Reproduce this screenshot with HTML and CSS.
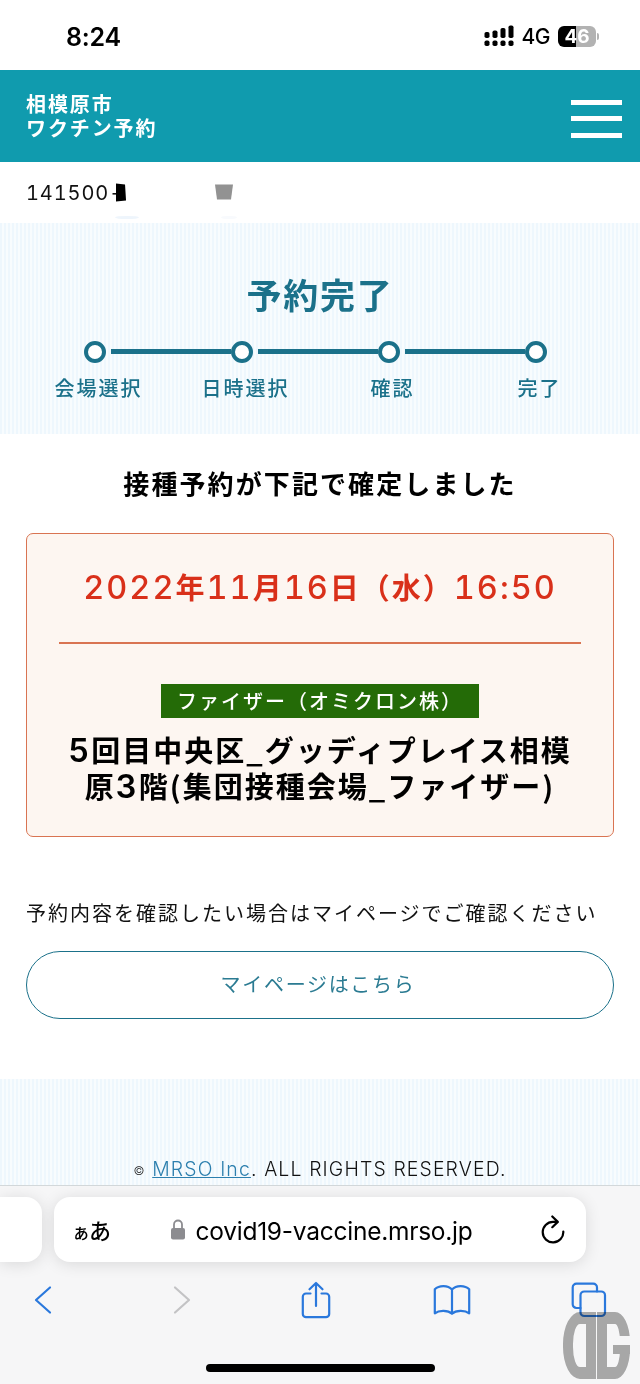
FILE: index.html
```
<!DOCTYPE html>
<html lang="ja">
<head>
  <meta charset="UTF-8" />
  <meta name="viewport" content="width=device-width, initial-scale=1.0"/>
  <title>相模原市 ワクチン予約</title>
  <link rel="stylesheet" href="styles.css">
</head>
<body>
  <div class="status-bar">
    <span class="time">8:24</span>
    <div class="status-icons">
      <svg class="signal" width="30" height="22" viewBox="0 0 30 22">
        <rect x="0.5" y="7" width="5" height="6" rx="1.8"/>
        <rect x="8.5" y="5.5" width="5" height="7.5" rx="1.8"/>
        <rect x="16.5" y="3" width="5" height="10" rx="1.8"/>
        <rect x="24.5" y="0.5" width="5" height="12.5" rx="1.8"/>
        <rect x="0.5" y="15.5" width="5" height="5.5" rx="1.8"/>
        <rect x="8.5" y="15.5" width="5" height="5.5" rx="1.8"/>
        <rect x="16.5" y="15.5" width="5" height="5.5" rx="1.8"/>
        <rect x="24.5" y="15.5" width="5" height="5.5" rx="1.8"/>
      </svg>
      <span class="network">4G</span>
      <span class="battery">46</span>
      <span class="battery-tip"></span>
    </div>
  </div>

  <header>
    <h1>相模原市<br>ワクチン予約</h1>
    <button class="menu" aria-label="メニュー"><span></span><span></span><span></span></button>
  </header>

  <div class="user-id">
    <span>141500-</span>
    <svg class="masks" width="130" height="61" viewBox="0 0 130 61">
      <path d="M1 21.5L10 22.5L11 38.5L1 39.5Z" fill="#000"/>
      <path d="M100 22.5H118L116 37.5H102Z" fill="#929292"/>
      <ellipse cx="12" cy="55.5" rx="12" ry="1.6" fill="#eef5fc"/>
      <ellipse cx="114" cy="55.5" rx="8" ry="1.6" fill="#f8fafd"/>
    </svg>
  </div>

  <section class="progress">
    <h2>予約完了</h2>
    <div class="dots">
      <span class="dot"></span><span class="line"></span>
      <span class="dot"></span><span class="line"></span>
      <span class="dot"></span><span class="line"></span>
      <span class="dot"></span>
    </div>
    <ul class="steps">
      <li>会場選択</li>
      <li>日時選択</li>
      <li>確認</li>
      <li>完了</li>
    </ul>
  </section>

  <main>
    <h3>接種予約が下記で確定しました</h3>
    <div class="card">
      <p class="date"><span class="num">2022</span>年<span class="num">11</span>月<span class="num">16</span>日（水）<span class="num">16:50</span></p>
      <hr>
      <span class="vaccine">ファイザー（オミクロン株）</span>
      <p class="place"><span class="num">5</span>回目中央区_グッディプレイス相模<br>原<span class="num">3</span>階(集団接種会場_ファイザー)</p>
    </div>
    <p class="note">予約内容を確認したい場合はマイページでご確認ください</p>
    <a class="mypage" href="#">マイページはこちら</a>
  </main>

  <footer>
    <p><small>©</small> <a href="#">MRSO Inc</a>. ALL RIGHTS RESERVED.</p>
  </footer>

  <div class="browser">
    <div class="tabs">
      <div class="prev-tab"></div>
      <div class="address">
        <span class="reader"><small>ぁ</small>あ</span>
        <div class="url">
          <svg width="16" height="21" viewBox="0 0 16 21">
            <path d="M4 10V5.5a4 4 0 0 1 8 0V10" fill="none" stroke="#8c8c90" stroke-width="1.8"/>
            <rect x="1" y="9" width="14" height="11.5" rx="2" fill="#8c8c90"/>
          </svg>
          <span>covid19-vaccine.mrso.jp</span>
        </div>
        <svg class="reload" width="26" height="30" viewBox="0 0 26 30">
          <path d="M17.2 6.8H13A10.3 10.3 0 1 0 23.3 16.5M12.3 1.5L17.8 6.9L12.3 12.2"/>
        </svg>
      </div>
    </div>
    <div class="toolbar">
      <svg width="18" height="30" viewBox="0 0 18 30"><path d="M16 2.5L2 15L16 27.5"/></svg>
      <svg class="off" width="18" height="30" viewBox="0 0 18 30"><path d="M2 2.5L16 15L2 27.5"/></svg>
      <svg width="30" height="38" viewBox="0 0 30 38"><path d="M9.5 12.5H5A3.2 3.2 0 0 0 1.8 15.7V33A3.2 3.2 0 0 0 5 36.2H25A3.2 3.2 0 0 0 28.2 33V15.7A3.2 3.2 0 0 0 25 12.5H20.5M15 25V2.2M8.5 8.3L15 2L21.5 8.3"/></svg>
      <svg width="38" height="32" viewBox="0 0 38 32"><path d="M19 5.5C15 1 6 1 1.8 5.3V29.3C6 26 15 26 19 29.8C23 26 32 26 36.2 29.3V5.3C32 1 23 1 19 5.5V29.8"/></svg>
      <svg width="36" height="36" viewBox="0 0 36 36"><path d="M9.5 26H5.5A3.8 3.8 0 0 1 1.7 22.2V5.5A3.8 3.8 0 0 1 5.5 1.7H22.2A3.8 3.8 0 0 1 26 5.5V9.5"/><rect x="9.5" y="9.5" width="24.5" height="24.5" rx="3.8"/></svg>
    </div>
    <div class="home-bar"></div>
    <div class="badge"><span class="badge-left"></span><span class="badge-right"></span></div>
  </div>
</body>
</html>
```
FILE: styles.css
```
* {
  margin: 0;
  padding: 0;
  box-sizing: border-box;
}
body {
  width: 640px;
  height: 1384px;
  overflow: hidden;
  display: flex;
  flex-direction: column;
  background: #fff;
  color: #111;
  font-family: "Noto Sans CJK JP", sans-serif;
}
svg {
  display: block;
  flex: none;
}

/* phone status bar */
.status-bar {
  height: 70px;
  padding: 2px 41px 0 66px;
  display: flex;
  justify-content: space-between;
  align-items: center;
  font-family: Inter, sans-serif;
  color: #000;
}
.time {
  margin-top: 1px;
  font-size: 25px;
  font-weight: 600;
  letter-spacing: -0.2px;
}
.status-icons {
  display: flex;
  align-items: center;
}
.network {
  font-size: 21px;
  font-weight: 500;
  margin: 0 8px;
  letter-spacing: -0.5px;
}
.battery {
  width: 38px;
  height: 21px;
  line-height: 21px;
  border-radius: 6px;
  background: linear-gradient(90deg, #000 18px, #b2b2b2 18px);
  color: #fff;
  font-size: 19px;
  font-weight: 700;
  text-align: center;
}
.battery-tip {
  width: 2px;
  height: 7px;
  margin-left: 1px;
  border-radius: 0 2px 2px 0;
  background: #b2b2b2;
}

header {
  height: 92px;
  padding: 0 18px 0 26px;
  display: flex;
  justify-content: space-between;
  align-items: center;
  background: #109bae;
  color: #fff;
}
header h1 {
  font-size: 20px;
  font-weight: 700;
  line-height: 24px;
  letter-spacing: 1.9px;
}
.menu {
  width: 51px;
  border: 0;
  background: none;
  display: flex;
  flex-direction: column;
  gap: 11.5px;
  margin-top: 5px;
}
.menu span {
  height: 5px;
  background: #fff;
}

.user-id {
  height: 61px;
  padding-left: 26px;
  display: flex;
  align-items: center;
  font-family: Inter, sans-serif;
  font-size: 20px;
  font-weight: 400;
  font-variant-numeric: tabular-nums;
  letter-spacing: 0.9px;
}
.user-id span {
  width: 89px;
}

.progress,
footer {
  background: repeating-linear-gradient(90deg, #eef7fd 0, #eef7fd 2px, #f8fcfe 2px, #f8fcfe 4px);
}
.progress {
  height: 211px;
  padding-top: 46px;
  color: #1b718a;
}
.progress h2 {
  font-size: 35px;
  font-weight: 700;
  line-height: 50px;
  letter-spacing: 1.8px;
  text-align: center;
}
.dots {
  display: flex;
  align-items: center;
  margin: 22px 0 0 84px;
  width: 463px;
}
.dot {
  width: 22px;
  height: 22px;
  border: 4.5px solid #1b718a;
  border-radius: 50%;
  background: #fff;
  flex: none;
}
.line {
  flex: 1;
  height: 5px;
  margin: -2px 0 0 5px;
  background: #1b718a;
}
.steps {
  display: grid;
  grid-template-columns: repeat(4, 147px);
  margin: 10px 0 0 25px;
  list-style: none;
  text-align: center;
  font-size: 20px;
  font-weight: 500;
  line-height: 30px;
  letter-spacing: 2px;
}

main {
  height: 645px;
  padding: 30px 26px 0;
}
main h3 {
  font-size: 26px;
  font-weight: 700;
  line-height: 38px;
  letter-spacing: 2.1px;
  text-align: center;
  color: #000;
}
.card {
  height: 304px;
  margin-top: 31px;
  padding: 29px 32px 0;
  border: 1.5px solid #d97452;
  border-radius: 7px;
  background: #fdf6f1;
  text-align: center;
}
.num {
  font-family: Inter, sans-serif;
  font-size: 32.5px;
  font-weight: 500;
  font-variant-numeric: tabular-nums;
  line-height: 0;
}
.date {
  font-size: 29px;
  font-weight: 700;
  line-height: 46px;
  letter-spacing: 2px;
  color: #d9301a;
  white-space: nowrap;
}
.card hr {
  margin: 33px 0 40px;
  border: 0;
  border-top: 2px solid #d97452;
}
.vaccine {
  display: block;
  width: 318px;
  height: 34px;
  margin: 0 auto 13px;
  background: #246b07;
  color: #fff;
  font-size: 20px;
  font-weight: 500;
  line-height: 34px;
  letter-spacing: 2px;
  white-space: nowrap;
}
.place {
  color: #000;
  font-size: 29px;
  font-weight: 700;
  line-height: 36px;
  letter-spacing: 2px;
  white-space: nowrap;
}
.place .num {
  font-weight: 600;
}
.note {
  margin-top: 61px;
  font-size: 20px;
  font-weight: 400;
  line-height: 30px;
  letter-spacing: 2px;
  white-space: nowrap;
}
.mypage {
  display: block;
  height: 68px;
  margin-top: 23px;
  padding-right: 4px;
  border: 1.5px solid #1b718a;
  border-radius: 34px;
  color: #2b7b92;
  font-size: 20px;
  font-weight: 400;
  line-height: 64px;
  letter-spacing: 1.7px;
  text-align: center;
  text-decoration: none;
}

footer {
  height: 106px;
  padding-top: 77px;
  text-align: center;
  font-family: Inter, sans-serif;
  font-size: 19.4px;
  font-weight: 350;
  line-height: 26px;
  letter-spacing: 1.15px;
  white-space: nowrap;
}
footer small {
  font-size: 12px;
  vertical-align: 1px;
}
footer a {
  color: #2c7fae;
}

/* browser controls */
.browser {
  position: relative;
  height: 199px;
  border-top: 1px solid #d3d8da;
  background: #f6f6f7;
}
.tabs {
  height: 76px;
  padding-top: 11px;
  display: flex;
  gap: 12px;
}
.prev-tab,
.address {
  height: 65px;
  background: #fff;
  box-shadow: 0 2px 16px rgba(0, 0, 0, 0.12);
}
.prev-tab {
  width: 42px;
  border-radius: 0 16px 16px 0;
}
.address {
  width: 532px;
  padding: 0 20px 0 18px;
  border-radius: 16px;
  display: flex;
  justify-content: space-between;
  align-items: center;
  color: #000;
}
.reader {
  margin-top: -2px;
  font-size: 22px;
  font-weight: 500;
  letter-spacing: -1px;
}
.reader small {
  font-size: 18px;
}
.url {
  display: flex;
  align-items: center;
  gap: 9px;
  margin-right: 7px;
  font-family: Inter, sans-serif;
  font-size: 24.5px;
  letter-spacing: -0.25px;
}
.url span {
  margin-top: 2px;
}
.reload {
  fill: none;
  stroke: #000;
  stroke-width: 2.2;
  stroke-linecap: round;
  stroke-linejoin: round;
}
.toolbar {
  width: 682px;
  height: 76px;
  margin-left: -25px;
  display: grid;
  grid-template-columns: repeat(5, 1fr);
  justify-items: center;
  align-items: center;
}
.toolbar svg {
  fill: none;
  stroke: #2a78dc;
  stroke-width: 2.2;
  stroke-linecap: round;
  stroke-linejoin: round;
}
.toolbar .off {
  margin-left: 5px;
  stroke: #c3c3c5;
}
.home-bar {
  width: 229px;
  height: 8px;
  margin: 26px auto 0;
  border-radius: 4px;
  background: #000;
}

/* site mark over the bottom corner */
.badge {
  position: absolute;
  right: 10px;
  bottom: 5px;
  display: flex;
  gap: 1px;
  mix-blend-mode: multiply;
}
.badge span {
  width: 33px;
  height: 67px;
  border: 12px solid #adadad;
  border-width: 12px 10px;
}
.badge .badge-left {
  border-radius: 17px 0 0 17px / 32px 0 0 32px;
}
.badge .badge-right {
  position: relative;
  border-radius: 0 15px 15px 0 / 0 30px 30px 0;
}
.badge-right::before {
  content: "";
  position: absolute;
  top: 12px;
  right: -10px;
  width: 12px;
  height: 9px;
  background: #fff;
}
.badge-right::after {
  content: "";
  position: absolute;
  top: 21px;
  right: -10px;
  width: 17px;
  height: 9px;
  background: #adadad;
}
```
